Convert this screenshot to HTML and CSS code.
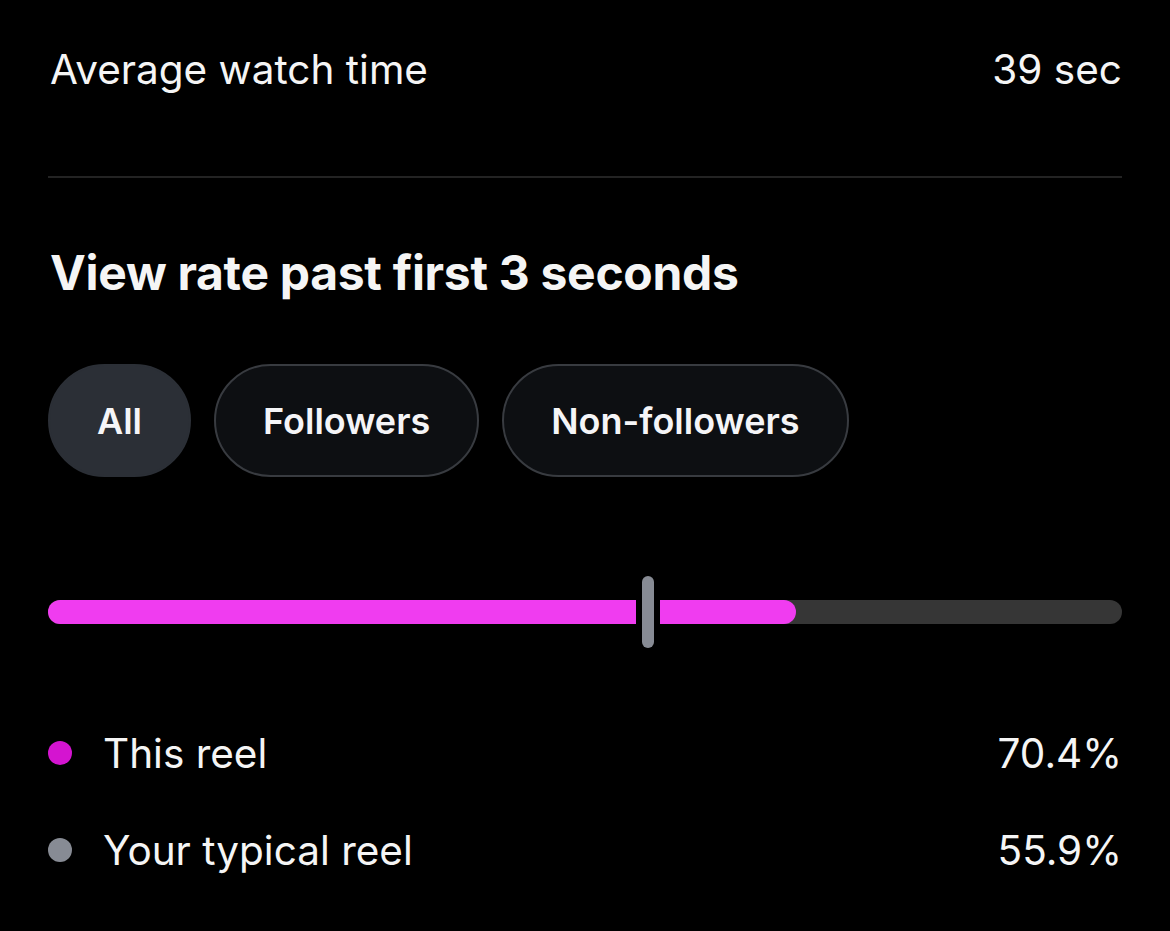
FILE: index.html
```html
<!DOCTYPE html>
<html>
<head>
<meta charset="utf-8">
<link rel="stylesheet" href="styles.css">
</head>
<body>
<main class="panel">
  <div class="stat-row">
    <span class="stat-label">Average watch time</span>
    <span class="stat-value">39 sec</span>
  </div>
  <hr class="divider">
  <h2 class="section-title">View rate past first 3 seconds</h2>
  <div class="pills">
    <button class="pill pill-active">All</button>
    <button class="pill">Followers</button>
    <button class="pill">Non-followers</button>
  </div>
  <div class="bar">
    <div class="bar-fill" style="width: 69.65%"></div>
    <div class="bar-marker" style="left: 55.9%"></div>
  </div>
  <ul class="legend">
    <li class="legend-row">
      <span class="dot dot-pink"></span>
      <span class="legend-label">This reel</span>
      <span class="legend-value">70.4%</span>
    </li>
    <li class="legend-row">
      <span class="dot dot-grey"></span>
      <span class="legend-label">Your typical reel</span>
      <span class="legend-value">55.9%</span>
    </li>
  </ul>
</main>
</body>
</html>
```
FILE: styles.css
```css
html, body {
  margin: 0;
  padding: 0;
  background: #000;
}
body {
  font-family: Inter, "Noto Sans", "Liberation Sans", sans-serif;
  color: #f5f5f5;
  width: 1170px;
  height: 931px;
  overflow: hidden;
}
.panel {
  padding: 0 48px;
  display: flex;
  flex-direction: column;
}
.stat-row {
  display: flex;
  justify-content: space-between;
  align-items: baseline;
  font-size: 40.5px;
  line-height: 48px;
  margin-top: 46px;
  padding: 0 0 0 2px;
}
.divider {
  border: 0;
  height: 2px;
  background: #232323;
  margin: 82px 0 0;
}
.section-title {
  margin: 67px 0 0;
  font-size: 48px;
  line-height: 56px;
  font-weight: 700;
  padding-left: 2px;
  letter-spacing: -0.3px;
}
.pills {
  display: flex;
  gap: 23px;
  margin-top: 63px;
}
.pill {
  height: 113px;
  padding: 0 47px;
  border-radius: 57px;
  border: 2px solid #383b40;
  background: #0d0f12;
  color: #f5f5f7;
  font-family: inherit;
  font-size: 36px;
  font-weight: 600;
}
.pill-active {
  background: #2b2f36;
  border-color: #2b2f36;
}
.bar {
  position: relative;
  height: 24px;
  border-radius: 12px;
  background: #363636;
  margin-top: 123px;
}
.bar-fill {
  height: 100%;
  border-radius: 12px;
  background: #f03cf0;
}
.bar-marker {
  position: absolute;
  top: -24px;
  width: 12px;
  height: 72px;
  margin-left: -6px;
  border-radius: 6px;
  background: #878b94;
  box-shadow: 0 0 0 6px #000;
}
.legend {
  list-style: none;
  margin: 105px 0 0;
  padding: 0;
  display: flex;
  flex-direction: column;
  gap: 49px;
}
.legend-row {
  display: flex;
  align-items: center;
  height: 48px;
  font-size: 40.5px;
}
.dot {
  width: 24px;
  height: 24px;
  border-radius: 50%;
  margin-right: 31px;
  flex: none;
}
.dot-pink { background: #d414d0; }
.dot-grey { background: #878b94; }
.legend-label { flex: 1; }
.legend-value { padding-right: 0; }
```
